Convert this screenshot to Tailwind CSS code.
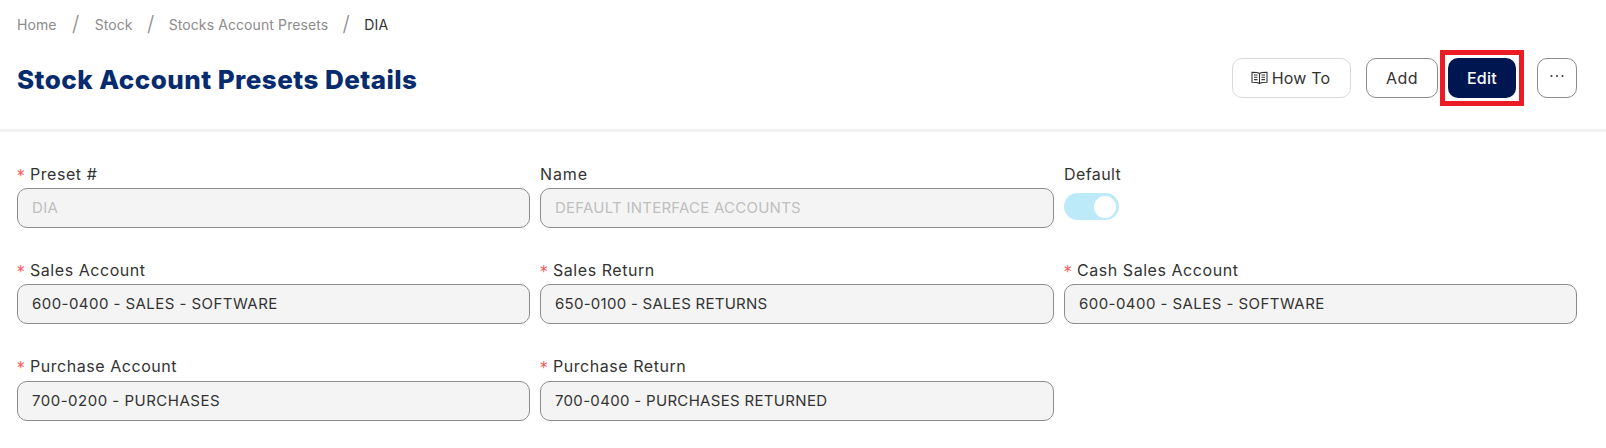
<!DOCTYPE html>
<html lang="en">

<head>
    <meta charset="UTF-8">
    <meta name="viewport" content="width=device-width, initial-scale=1.0">
    <title>Stock Account Presets Details</title>
    <script src="https://cdn.jsdelivr.net/npm/@tailwindcss/browser@4"></script>
</head>

<body class="bg-white font-['Inter',sans-serif] text-[#333] overflow-hidden">
    <header class="h-[132px] border-b-[3px] border-[#f2f2f2] px-[17px]">
        <nav class="flex items-center h-[50px] text-[14px] tracking-[0.1px] text-[#8c8c8c] pb-[2px]">
            <a href="#">Home</a>
            <span class="text-[21px] font-light w-[38px] text-center">/</span>
            <a href="#">Stock</a>
            <span class="text-[21px] font-light w-[36px] text-center">/</span>
            <a href="#">Stocks Account Presets</a>
            <span class="text-[21px] font-light w-[36px] text-center">/</span>
            <span class="text-[#333]">DIA</span>
        </nav>
        <div class="flex items-center justify-between">
            <h1 class="text-[26px] font-extrabold tracking-[0.45px] text-[#062b6e] mt-[3px]">Stock Account Presets Details</h1>
            <div class="flex items-center pr-[12px]">
                <button class="flex items-center justify-center gap-[4px] w-[119px] h-[40px] pr-[2px] border border-[#d9d9d9] rounded-[10px] text-[16px] tracking-[0.2px]">
                    <svg width="17" height="14" viewBox="0 0 17 14" fill="none" stroke="#333" stroke-width="1.1">
                        <path d="M8.5 2.5C7 1.2 4 1.2 1 1.2v10c3 0 6 0 7.5 1.3 1.5-1.3 4.5-1.3 7.5-1.3v-10c-3 0-6 0-7.5 1.3zM8.5 2.5v10" />
                        <path d="M3 4h3.5M3 6.3h3.5M3 8.6h3.5M10.5 4H14M10.5 6.3H14M10.5 8.6H14" />
                    </svg>
                    How To
                </button>
                <button class="w-[72px] h-[40px] ml-[15px] border border-[#8c8c8c] rounded-[10px] text-[16px] tracking-[0.5px]">Add</button>
                <div class="ml-[2px] border-[5px] border-[#ec1c24] px-[3px] py-[3px] flex">
                    <button class="w-[68px] h-[40px] bg-[#001650] text-white rounded-[10px] text-[16px] font-medium tracking-[0.3px]">Edit</button>
                </div>
                <button class="w-[40px] h-[40px] ml-[13px] border border-[#8c8c8c] rounded-[10px] flex items-center justify-center pb-[4px]">
                    <svg width="16" height="4" viewBox="0 0 16 4" fill="#333">
                        <circle cx="2.5" cy="2" r="1" />
                        <circle cx="8" cy="2" r="1" />
                        <circle cx="13.5" cy="2" r="1" />
                    </svg>
                </button>
            </div>
        </div>
    </header>

    <form class="grid grid-cols-[513px_514px_513px] gap-x-[10px] gap-y-[31px] px-[17px] pt-[31px]">
        <div>
            <label class="flex items-center h-[25px] pb-[4px] text-[16px] tracking-[0.55px]"><span class="text-[#ff4d4f] w-[13px] pt-[5px] text-[15px] font-['DejaVu_Sans'] tracking-normal">*</span>Preset #</label>
            <input disabled value="DIA" class="w-full h-[40px] px-[14px] pb-[1px] bg-[#f4f4f4] border border-[#8c8c8c] rounded-[10px] text-[15px] tracking-[0.3px] text-[#bfbfbf]">
        </div>
        <div>
            <label class="flex items-center h-[25px] pb-[4px] text-[16px] tracking-[0.9px]">Name</label>
            <input disabled value="DEFAULT INTERFACE ACCOUNTS" class="w-full h-[40px] px-[14px] pb-[1px] bg-[#f4f4f4] border border-[#8c8c8c] rounded-[10px] text-[15px] tracking-[0.24px] text-[#bfbfbf]">
        </div>
        <div>
            <label class="flex items-center h-[25px] pb-[4px] text-[16px] tracking-[0.4px]">Default</label>
            <div class="flex justify-end items-center w-[55px] h-[27px] mt-[5px] pr-[3px] bg-[#bdeaf9] rounded-full">
                <span class="w-[22px] h-[22px] bg-white rounded-full"></span>
            </div>
        </div>

        <div>
            <label class="flex items-center h-[25px] pb-[4px] text-[16px] tracking-[0.55px]"><span class="text-[#ff4d4f] w-[13px] pt-[5px] text-[15px] font-['DejaVu_Sans'] tracking-normal">*</span>Sales Account</label>
            <input readonly value="600-0400 - SALES - SOFTWARE" class="w-full h-[40px] px-[14px] pb-[2px] bg-[#f4f4f4] border border-[#8c8c8c] rounded-[10px] text-[15px] tracking-[0.45px]">
        </div>
        <div>
            <label class="flex items-center h-[25px] pb-[4px] text-[16px] tracking-[0.55px]"><span class="text-[#ff4d4f] w-[13px] pt-[5px] text-[15px] font-['DejaVu_Sans'] tracking-normal">*</span>Sales Return</label>
            <input readonly value="650-0100 - SALES RETURNS" class="w-full h-[40px] px-[14px] pb-[2px] bg-[#f4f4f4] border border-[#8c8c8c] rounded-[10px] text-[15px] tracking-[0.27px]">
        </div>
        <div>
            <label class="flex items-center h-[25px] pb-[4px] text-[16px] tracking-[0.55px]"><span class="text-[#ff4d4f] w-[13px] pt-[5px] text-[15px] font-['DejaVu_Sans'] tracking-normal">*</span>Cash Sales Account</label>
            <input readonly value="600-0400 - SALES - SOFTWARE" class="w-full h-[40px] px-[14px] pb-[2px] bg-[#f4f4f4] border border-[#8c8c8c] rounded-[10px] text-[15px] tracking-[0.45px]">
        </div>

        <div>
            <label class="flex items-center h-[26px] pb-[5px] text-[16px] tracking-[0.55px]"><span class="text-[#ff4d4f] w-[13px] pt-[5px] text-[15px] font-['DejaVu_Sans'] tracking-normal">*</span>Purchase Account</label>
            <input readonly value="700-0200 - PURCHASES" class="w-full h-[40px] px-[14px] pb-[1px] bg-[#f4f4f4] border border-[#8c8c8c] rounded-[10px] text-[15px] tracking-[0.5px]">
        </div>
        <div>
            <label class="flex items-center h-[26px] pb-[5px] text-[16px] tracking-[0.55px]"><span class="text-[#ff4d4f] w-[13px] pt-[5px] text-[15px] font-['DejaVu_Sans'] tracking-normal">*</span>Purchase Return</label>
            <input readonly value="700-0400 - PURCHASES RETURNED" class="w-full h-[40px] px-[14px] pb-[1px] bg-[#f4f4f4] border border-[#8c8c8c] rounded-[10px] text-[15px] tracking-[0.32px]">
        </div>
    </form>
</body>

</html>
